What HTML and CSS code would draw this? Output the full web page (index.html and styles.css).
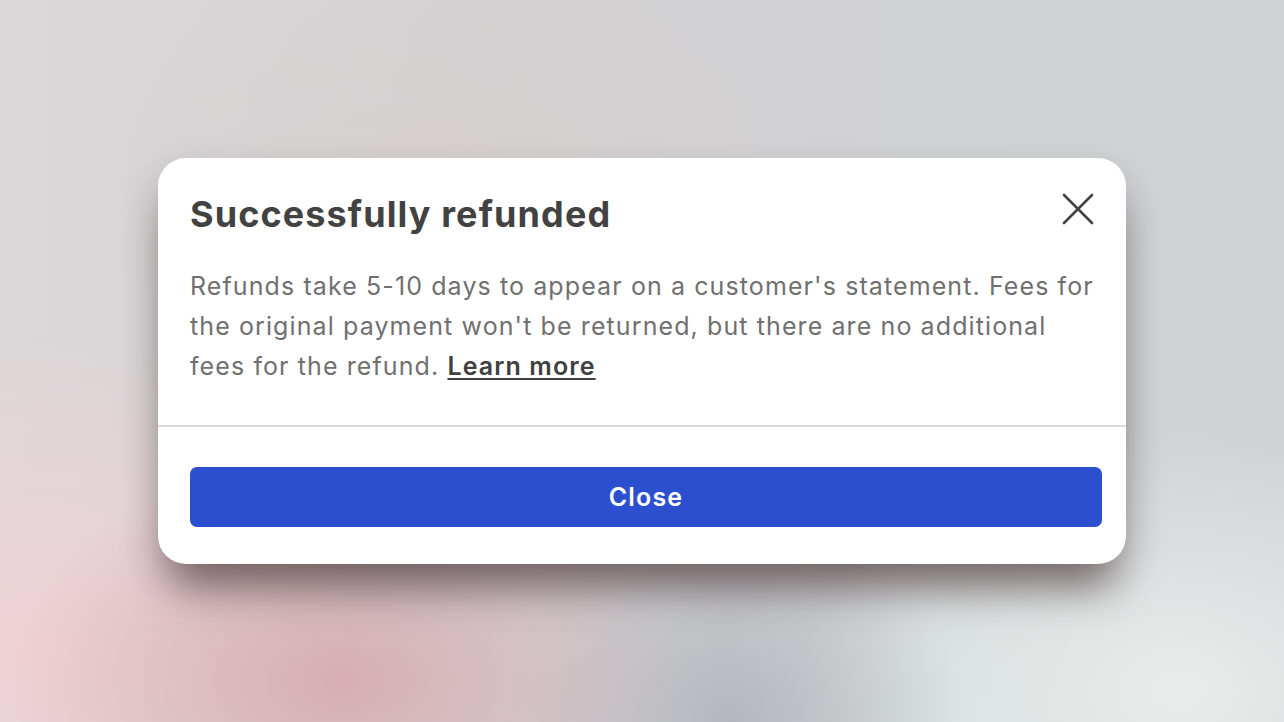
FILE: index.html
```html
<!DOCTYPE html>
<html>
<head>
<meta charset="utf-8">
<link rel="stylesheet" href="styles.css">
</head>
<body>
<div class="stage">
  <div class="modal">
    <div class="modal-body">
      <div class="modal-head">
        <h1 class="title">Successfully refunded</h1>
        <button class="close-x" aria-label="Close">
          <svg width="32" height="32" viewBox="0 0 32 32"><path d="M2 2 L30 30 M30 2 L2 30" stroke="#444" stroke-width="2.6" stroke-linecap="round" fill="none"/></svg>
        </button>
      </div>
      <p class="text">Refunds take 5-10 days to appear on a customer's statement. Fees for the original payment won't be returned, but there are no additional fees for the refund. <a class="link" href="#">Learn more</a></p>
    </div>
    <div class="modal-foot">
      <button class="btn">Close</button>
    </div>
  </div>
</div>
</body>
</html>
```
FILE: styles.css
```css
html, body { margin: 0; padding: 0; }
body {
  width: 1284px; height: 722px; overflow: hidden;
  font-family: Inter, "Noto Sans", sans-serif;
}
.stage {
  width: 1284px; height: 722px;
  display: flex; align-items: flex-start; justify-content: center;
  padding-top: 158px; box-sizing: border-box;
  background:
    radial-gradient(ellipse 340px 220px at 340px 680px, rgba(214,172,178,0.95), rgba(214,172,178,0) 100%),
    radial-gradient(ellipse 230px 220px at 730px 720px, rgba(178,182,188,0.95), rgba(178,182,188,0) 100%),
    radial-gradient(ellipse 360px 320px at 40px 650px, rgba(240,210,214,1), rgba(240,210,214,0) 100%),
    radial-gradient(ellipse 380px 260px at 1180px 690px, rgba(232,236,234,1), rgba(232,236,234,0) 100%),
    radial-gradient(ellipse 280px 220px at 980px 720px, rgba(214,224,224,0.9), rgba(214,224,224,0) 100%),
    radial-gradient(ellipse 380px 220px at 440px 180px, rgba(216,208,208,0.8), rgba(216,208,208,0) 100%),
    linear-gradient(90deg, #dbd8d9 0%, #d4d2d3 40%, #d0d3d6 100%);
}
.modal {
  width: 968px;
  background: #fff;
  border-radius: 28px;
  box-shadow: 0 34px 44px -12px rgba(70,50,52,0.65), 0 12px 40px rgba(0,0,0,0.12);
  overflow: hidden;
}
.modal-body {
  padding: 30px 24px 39px 32px;
  border-bottom: 2px solid #d9d9d9;
}
.modal-head {
  display: flex; justify-content: space-between; align-items: flex-start;
}
.title {
  margin: 0;
  font-size: 36px; font-weight: 700; color: #424242;
  line-height: 52px; letter-spacing: 1.1px;
}
.close-x {
  border: 0; background: none; padding: 0; margin: 5px 8px 0 0;
  width: 32px; height: 32px; cursor: pointer; display: block;
}
.close-x svg { display: block; }
.text {
  margin: 26px 0 0 0;
  font-size: 25px; line-height: 40px; color: #707070;
  letter-spacing: 1.1px;
}
.link {
  color: #404040; font-weight: 600; text-decoration: underline;
  text-underline-offset: 3px; text-decoration-thickness: 2px;
}
.modal-foot {
  padding: 40px 24px 37px 32px;
}
.btn {
  display: block; width: 100%; height: 60px;
  border: 0; border-radius: 7px;
  background: #2b4fcf; color: #fff;
  font-family: Inter, "Noto Sans", sans-serif;
  font-size: 25px; font-weight: 600; letter-spacing: 1.2px;
}
```
